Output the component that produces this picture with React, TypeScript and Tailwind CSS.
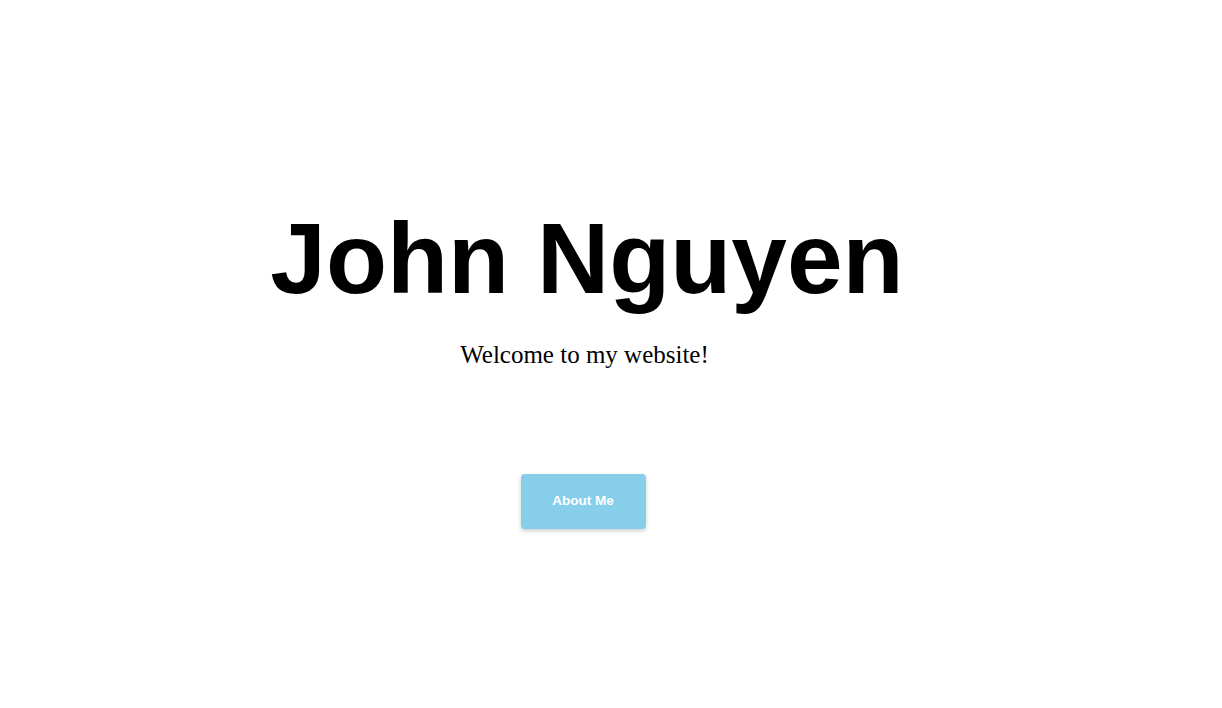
export default function App() {
  return (
    <div className="min-h-[708px] w-full bg-white">
      <div className="flex flex-col items-center pr-[48px] pt-[208px]">
        <h1 className="text-[100px] font-bold leading-[100px] text-black [font-family:'Liberation_Sans',Arial,sans-serif]">
          John Nguyen
        </h1>
        <p className="mt-[35px] mr-[5px] text-[25px] leading-[24px] text-black [font-family:'Liberation_Serif','Times_New_Roman',serif]">
          Welcome to my website!
        </p>
        <button
          type="button"
          className="mt-[107px] mr-[8px] flex h-[55px] w-[125px] items-center justify-center rounded-[4px] bg-[#87ceeb] text-[13.5px] font-bold text-white shadow-[0_2px_4px_rgba(0,0,0,0.2)] [font-family:'Liberation_Sans',Arial,sans-serif]"
        >
          About Me
        </button>
      </div>
    </div>
  )
}
